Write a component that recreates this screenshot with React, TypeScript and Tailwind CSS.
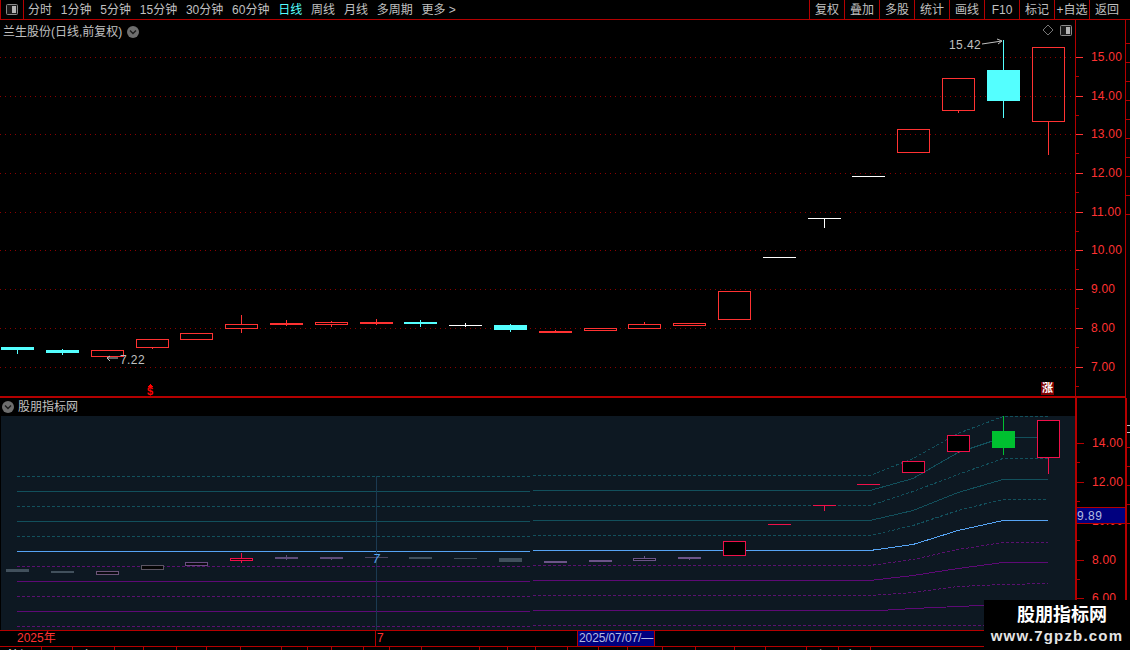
const RED = '#ff3232';
const CYAN = '#54ffff';
const CRIMSON = '#f0104a';

const leftTabs = [
  { label: '分时', active: false },
  { label: '1分钟', active: false },
  { label: '5分钟', active: false },
  { label: '15分钟', active: false },
  { label: '30分钟', active: false },
  { label: '60分钟', active: false },
  { label: '日线', active: true },
  { label: '周线', active: false },
  { label: '月线', active: false },
  { label: '多周期', active: false },
  { label: '更多 >', active: false },
];

const rightTabs = ['复权', '叠加', '多股', '统计', '画线', 'F10', '标记', '+自选', '返回'];

type Bar = { x: number; top: number; bot: number; hi?: number; lo?: number; kind: 'up' | 'solid' | 'cyan' | 'white' };

// page coordinates, read off the screenshot
const priceBars: Bar[] = [
  { x: 1, top: 347, bot: 350, lo: 354, kind: 'cyan' },
  { x: 46, top: 350, bot: 353, hi: 349, lo: 355, kind: 'cyan' },
  { x: 91, top: 350, bot: 357, kind: 'up' },
  { x: 136, top: 339, bot: 348, lo: 349, kind: 'up' },
  { x: 180, top: 333, bot: 340, kind: 'up' },
  { x: 225, top: 324, bot: 329, hi: 315, lo: 333, kind: 'up' },
  { x: 270, top: 323, bot: 325, hi: 320, lo: 326, kind: 'solid' },
  { x: 315, top: 322, bot: 325, hi: 321, lo: 327, kind: 'up' },
  { x: 360, top: 322, bot: 324, hi: 319, lo: 325, kind: 'solid' },
  { x: 404, top: 322, bot: 324, hi: 320, lo: 327, kind: 'cyan' },
  { x: 449, top: 325, bot: 326, hi: 323, lo: 327, kind: 'white' },
  { x: 494, top: 325, bot: 330, hi: 324, lo: 332, kind: 'cyan' },
  { x: 539, top: 331, bot: 333, hi: 330, kind: 'solid' },
  { x: 584, top: 328, bot: 331, kind: 'up' },
  { x: 628, top: 324, bot: 329, hi: 322, kind: 'up' },
  { x: 673, top: 323, bot: 326, kind: 'up' },
  { x: 718, top: 291, bot: 320, kind: 'up' },
  { x: 763, top: 257, bot: 258, kind: 'white' },
  { x: 808, top: 218, bot: 219, lo: 228, kind: 'white' },
  { x: 852, top: 176, bot: 177, kind: 'white' },
  { x: 897, top: 129, bot: 153, kind: 'up' },
  { x: 942, top: 78, bot: 111, lo: 113, kind: 'up' },
  { x: 987, top: 70, bot: 101, hi: 40, lo: 118, kind: 'cyan' },
  { x: 1032, top: 47, bot: 122, lo: 155, kind: 'up' },
];

const indicatorBars = [
  { x: 6, top: 569, bot: 572, fill: '#41505c', stroke: '#41505c' },
  { x: 51, top: 571, bot: 573, fill: '#41505c', stroke: '#41505c' },
  { x: 96, top: 571, bot: 575, fill: '#0b0b10', stroke: '#6c5478' },
  { x: 141, top: 565, bot: 570, fill: '#050505', stroke: '#5c5664' },
  { x: 185, top: 562, bot: 566, fill: '#0b0b10', stroke: '#6a4c82' },
  { x: 230, top: 558, bot: 561, hi: 553, lo: 563, fill: '#200008', stroke: CRIMSON },
  { x: 275, top: 557, bot: 559, hi: 555, lo: 560, fill: '#5e4c7a', stroke: '#5e4c7a' },
  { x: 320, top: 557, bot: 559, lo: 560, fill: '#5e4c7a', stroke: '#5e4c7a' },
  { x: 365, top: 557, bot: 558, fill: '#4c4660', stroke: '#4c4660' },
  { x: 409, top: 557, bot: 559, fill: '#41505c', stroke: '#41505c' },
  { x: 454, top: 558, bot: 559, fill: '#41505c', stroke: '#41505c' },
  { x: 499, top: 558, bot: 562, fill: '#41505c', stroke: '#41505c' },
  { x: 544, top: 561, bot: 563, fill: '#6c5488', stroke: '#6c5488' },
  { x: 589, top: 560, bot: 562, fill: '#6c5488', stroke: '#6c5488' },
  { x: 633, top: 558, bot: 561, hi: 556, fill: '#0b0b10', stroke: '#6c5488' },
  { x: 678, top: 557, bot: 559, lo: 560, fill: '#6c5488', stroke: '#6c5488' },
  { x: 723, top: 541, bot: 556, fill: '#000000', stroke: CRIMSON },
  { x: 768, top: 524, bot: 525, fill: CRIMSON, stroke: CRIMSON },
  { x: 813, top: 505, bot: 506, lo: 511, fill: CRIMSON, stroke: CRIMSON },
  { x: 857, top: 484, bot: 485, fill: CRIMSON, stroke: CRIMSON },
  { x: 902, top: 461, bot: 473, fill: '#000000', stroke: CRIMSON },
  { x: 947, top: 435, bot: 452, lo: 453, fill: '#000000', stroke: CRIMSON },
  { x: 992, top: 431, bot: 448, hi: 416, lo: 455, fill: '#00c030', stroke: '#00c030' },
  { x: 1037, top: 420, bot: 458, lo: 474, fill: '#000000', stroke: CRIMSON },
];

const bands = [
  { pts: '533,475 870,475 913,458 958,433 1003,416 1048,416', left: 476, color: '#12505c', dash: true },
  { pts: '533,490 870,490 913,478 958,452 1003,437 1048,437', left: 491, color: '#12505c', dash: false },
  { pts: '533,505 870,505 913,491 958,474 1003,458 1048,458', left: 506, color: '#12505c', dash: true },
  { pts: '533,520 870,520 913,510 958,492 1003,479 1048,479', left: 521, color: '#12505c', dash: false },
  { pts: '533,535 870,535 913,525 958,510 1003,499 1048,499', left: 536, color: '#12505c', dash: true },
  { pts: '533,550 870,550 913,544 958,530 1003,520 1048,520', left: 551, color: '#56a4f4', dash: false },
  { pts: '533,565 870,565 913,559 958,549 1003,542 1048,542', left: 566, color: '#5a1070', dash: true },
  { pts: '533,580 870,580 913,575 958,568 1003,562 1048,562', left: 581, color: '#5e0a76', dash: false },
  { pts: '533,595 870,595 913,592 958,586 1003,584 1048,583', left: 596, color: '#5a1070', dash: true },
  { pts: '533,610 880,610 913,608 958,606 1003,604 1048,603', left: 611, color: '#5e0a76', dash: false },
  { pts: '533,625 1048,625', left: 626, color: '#5a1070', dash: true },
];

const priceTicks = [
  { y: 57, label: '15.00' },
  { y: 96, label: '14.00' },
  { y: 134, label: '13.00' },
  { y: 173, label: '12.00' },
  { y: 212, label: '11.00' },
  { y: 250, label: '10.00' },
  { y: 289, label: '9.00' },
  { y: 328, label: '8.00' },
  { y: 367, label: '7.00' },
];

const indicatorTicks = [
  { y: 443, label: '14.00' },
  { y: 482, label: '12.00' },
  { y: 521, label: '10.00' },
  { y: 560, label: '8.00' },
  { y: 598, label: '6.00' },
];

const bottomCells = [
  { w: 42, text: '沪深', color: 'text-white' },
  { w: 31 }, { w: 42, text: '上', color: 'text-white' }, { w: 29 }, { w: 33 }, { w: 30 }, { w: 34 }, { w: 41 }, { w: 26 }, { w: 24 }, { w: 32 }, { w: 26 },
  { w: 32 }, { w: 58 }, { w: 28 }, { w: 28 }, { w: 32 }, { w: 31 }, { w: 29 }, { w: 35 }, { w: 33 }, { w: 39 }, { w: 31 },
  { w: 41 }, { w: 32, text: '上', color: 'text-[#cccccc]' }, { w: 32, text: '行情', color: 'text-[#54ffff]' },
];

function Chevron({ className }: { className: string }) {
  return (
    <svg className={className} viewBox="0 0 12 12">
      <circle cx="6" cy="6" r="6" fill="#6e6e6e" />
      <path d="M3 4.5 L6 7.5 L9 4.5" fill="none" stroke="#1c1c1c" strokeWidth="1.4" />
    </svg>
  );
}

function PanelIcon({ className }: { className: string }) {
  return (
    <svg className={className} viewBox="0 0 12 11">
      <rect x="0.5" y="0.5" width="11" height="10" rx="1" fill="#1a1a1a" stroke="#8a8a8a" />
      <rect x="6" y="2" width="4" height="7" fill="#b4b4b4" />
    </svg>
  );
}

function Axis({ ticks, offset, thick }: { ticks: { y: number; label: string }[]; offset: number; thick?: boolean }) {
  return (
    <>
      <svg className="absolute inset-0 h-full w-full" shapeRendering="crispEdges">
        {ticks.map((t) => (
          <g key={t.y}>
            <line x1="0" x2="7" y1={t.y - offset + 0.5} y2={t.y - offset + 0.5} stroke={thick ? '#b40000' : RED} />
            <line x1="0" x2="3" y1={t.y - offset + 19.5} y2={t.y - offset + 19.5} stroke="#b40000" />
          </g>
        ))}
      </svg>
      {ticks.map((t) => (
        <span
          key={t.label}
          className="absolute left-[15px] -translate-y-1/2 text-[12px] leading-none tracking-[0.2px] text-[#ff3232]"
          style={{ top: t.y - offset }}
        >
          {t.label}
        </span>
      ))}
    </>
  );
}

export default function App() {
  return (
    <div className="relative flex h-[650px] w-[1130px] flex-col overflow-hidden bg-black font-['Liberation_Sans','Noto_Sans_CJK_SC',sans-serif] text-[12px] text-[#c0c0c0]">
      {/* toolbar */}
      <div className="flex h-5 shrink-0 items-center border-b border-[#b40000]">
        <div className="flex h-full w-6 items-center justify-center border-x border-[#b40000]">
          <PanelIcon className="h-[11px] w-3" />
        </div>
        <div className="ml-1 flex gap-[8.8px] whitespace-nowrap">
          {leftTabs.map((t) => (
            <span key={t.label} className={t.active ? 'text-[#54ffff]' : ''}>
              {t.label}
            </span>
          ))}
        </div>
        <div className="ml-auto mr-[6px] flex h-full">
          {rightTabs.map((t) => (
            <span key={t} className="flex h-full w-[35px] items-center justify-center whitespace-nowrap border-l border-[#b40000]">
              {t}
            </span>
          ))}
        </div>
      </div>

      <div className="flex min-h-0 flex-1">
        <div className="flex w-[1125px] flex-col">
          {/* price chart */}
          <div className="flex h-[378px] shrink-0 border-b-2 border-[#b40000]">
            <div className="relative w-[1075px]">
              <svg className="absolute inset-0 h-full w-full" viewBox="0 20 1075 376" shapeRendering="crispEdges">
                {priceTicks.map((t) => (
                  <line key={t.y} x1="0" x2="1075" y1={t.y + 0.5} y2={t.y + 0.5} stroke="#8c0000" strokeDasharray="1 4" />
                ))}
                {priceBars.map((b) => {
                  const color = b.kind === 'cyan' ? CYAN : b.kind === 'white' ? '#ffffff' : RED;
                  const mid = b.x + 16.5;
                  return (
                    <g key={b.x}>
                      {b.hi && <line x1={mid} x2={mid} y1={b.hi} y2={b.top} stroke={color} />}
                      {b.lo && <line x1={mid} x2={mid} y1={b.bot} y2={b.lo} stroke={color} />}
                      {b.kind === 'up' ? (
                        <rect x={b.x + 0.5} y={b.top + 0.5} width={32} height={b.bot - b.top - 1} fill="none" stroke={color} />
                      ) : (
                        <rect x={b.x} y={b.top} width={33} height={b.bot - b.top} fill={color} />
                      )}
                    </g>
                  );
                })}
                <path d="M982 44 L1002 41 M997 39 L1002 41 L998 44" fill="none" stroke="#c0c0c0" shapeRendering="auto" />
                <path d="M118 358 L107 358 M110 356 L107 358 L110 361" fill="none" stroke="#c0c0c0" shapeRendering="auto" />
                <path d="M150.5 384 L153 387 L148 387 Z" fill="#ff0000" />
              </svg>
              <div className="absolute left-[3px] top-[3px] flex items-center gap-[5px] whitespace-nowrap">
                <span>兰生股份(日线,前复权)</span>
                <Chevron className="h-3 w-3" />
              </div>
              <svg className="absolute left-[1042px] top-[4px] h-3 w-3" viewBox="0 0 12 12">
                <path d="M6 1 L11 6 L6 11 L1 6 Z" fill="none" stroke="#777777" />
              </svg>
              <PanelIcon className="absolute left-[1060px] top-[5px] h-[11px] w-3" />
              <span className="absolute left-[949px] top-[19px] leading-none tracking-[0.4px]">15.42</span>
              <span className="absolute left-[120px] top-[334px] leading-none tracking-[0.4px]">7.22</span>
              <span className="absolute left-[147px] top-[366px] text-[11px] font-bold leading-none text-[#ff0000]">$</span>
              <span className="absolute left-[1041px] top-[362px] flex h-[13px] w-[13px] items-center justify-center bg-[#800000] text-[11px] font-bold leading-none text-white">
                涨
              </span>
            </div>
            <div className="relative w-[50px] border-l border-[#b40000]">
              <Axis ticks={priceTicks} offset={20} />
            </div>
          </div>

          {/* indicator panel */}
          <div className="flex h-[232px] shrink-0">
            <div className="flex w-[1075px] flex-col">
              <div className="flex h-[18px] shrink-0 items-center gap-1 pl-0.5">
                <Chevron className="h-3 w-3" />
                <span>股朋指标网</span>
              </div>
              <div className="relative ml-px flex-1 bg-[#0d1822]">
                <svg className="absolute inset-0 h-full w-full" viewBox="1 416 1074 214" shapeRendering="crispEdges">
                  {bands.map((l) => (
                    <g key={l.left} fill="none" stroke={l.color} strokeDasharray={l.dash ? '3 2' : undefined}>
                      <line x1="17" x2="530" y1={l.left + 0.5} y2={l.left + 0.5} />
                      <polyline points={l.pts} transform="translate(0 0.5)" />
                    </g>
                  ))}
                  <line x1="376.5" x2="376.5" y1="476" y2="630" stroke="#1b3a52" />
                  {indicatorBars.map((b) => {
                    const mid = b.x + 11.5;
                    return (
                      <g key={b.x}>
                        {b.hi && <line x1={mid} x2={mid} y1={b.hi} y2={b.top} stroke={b.stroke} />}
                        {b.lo && <line x1={mid} x2={mid} y1={b.bot} y2={b.lo} stroke={b.stroke} />}
                        {b.fill === b.stroke ? (
                          <rect x={b.x} y={b.top} width={23} height={b.bot - b.top} fill={b.fill} />
                        ) : (
                          <rect x={b.x + 0.5} y={b.top + 0.5} width={22} height={b.bot - b.top - 1} fill={b.fill} stroke={b.stroke} />
                        )}
                      </g>
                    );
                  })}
                </svg>
                <span className="absolute left-[372px] top-[137px] text-[12px] italic leading-none text-[#5aa8f4]">7</span>
              </div>
            </div>
            <div className="relative w-[50px] border-l-2 border-[#b40000]">
              <Axis ticks={indicatorTicks} offset={398} thick />
              <div className="absolute inset-x-0 top-[109px] flex h-[17px] items-center border-y border-[#b40000] bg-[#00007f] text-[12px] leading-none tracking-[0.5px] text-[#b4bce0]">
                9.89
              </div>
            </div>
          </div>

          {/* time line */}
          <div className="flex h-[17px] shrink-0 border-y border-[#b40000] leading-[15px]">
            <div className="w-[375px] pl-[17px] text-[#ff3232]">2025年</div>
            <div className="w-[202px] border-l border-[#b40000] pl-px text-[#ff3232]">7</div>
            <div className="w-[78px] whitespace-nowrap border-x border-[#b40000] bg-[#00007f] pl-px tracking-[-0.1px] text-[#b4bce0]">2025/07/07/—</div>
          </div>

          {/* bottom tabs, cut off by the window */}
          <div className="flex h-[3px] shrink-0 overflow-hidden leading-[18px]">
            {bottomCells.map((c, i) => (
              <div key={i} className={`shrink-0 border-r border-[#b40000] pl-2 ${c.color ?? ''}`} style={{ width: c.w }}>
                {c.text}
              </div>
            ))}
          </div>
        </div>

        {/* narrow strip on the right */}
        <div className="flex w-[5px] flex-col">
          <div className="flex h-[378px] shrink-0 flex-col items-end gap-[18px] border-l border-[#b40000] pt-[23px]">
            {Array.from({ length: 10 }, (_, i) => (
              <div key={i} className="h-px w-1 bg-[#b40000]" />
            ))}
          </div>
          <div className="flex flex-1 flex-col items-end gap-[6px] border-l-2 border-[#b40000] pt-[27px]">
            <div className="h-px w-[3px] bg-[#c0c0c0]" />
            <div className="h-px w-[3px] bg-[#c0c0c0]" />
            <div className="mt-2 h-px w-[3px] bg-[#b40000]" />
            <div className="mt-3 h-px w-[3px] bg-[#b40000]" />
            <div className="mt-3 h-px w-[3px] bg-[#b40000]" />
            <div className="mt-3 h-px w-[3px] bg-[#b40000]" />
            <div className="mt-3 h-px w-[3px] bg-[#b40000]" />
          </div>
        </div>
      </div>

      {/* site watermark */}
      <div className="absolute bottom-0 right-0 flex h-[50px] w-[146px] flex-col items-center bg-black pt-1 text-white">
        <span className="ml-[10px] text-[18px] font-bold leading-[22px]">股朋指标网</span>
        <span className="text-[15px] font-bold leading-[19px] tracking-[1.2px] text-[#e4e4e4]">www.7gpzb.com</span>
      </div>
    </div>
  );
}
